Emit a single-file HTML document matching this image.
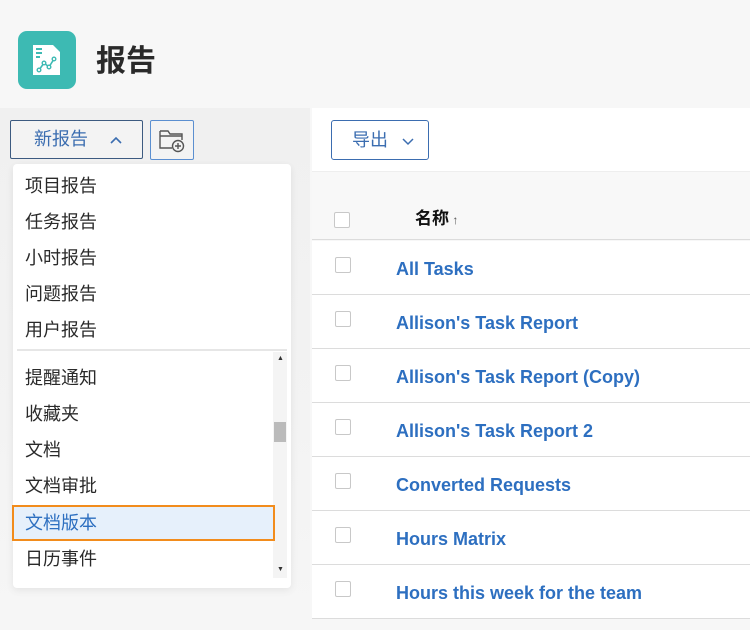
<!DOCTYPE html>
<html><head><meta charset="utf-8"><style>
*{margin:0;padding:0;box-sizing:border-box}
body{width:750px;height:630px;overflow:hidden;background:#f7f7f7;font-family:"Liberation Sans","Noto Sans CJK SC",sans-serif;position:relative}
.abs{position:absolute}
.item{position:absolute;left:25px;font-size:18px;color:#2a2a2a;line-height:36px;height:36px}
.row{position:absolute;left:312px;right:0;height:54px;border-bottom:1px solid #dcdcdc;background:#fff}
.row .cb{position:absolute;left:23px;top:16px;width:16px;height:16px;border:1px solid #c8c8c8;border-radius:2px;background:#fff}
.row .t{position:absolute;left:84px;top:0;line-height:56px;font-size:18px;font-weight:bold;color:#2d6fc0}
</style></head><body>
<div class="abs" style="left:18px;top:31px;width:58px;height:58px;border-radius:9px;background:#3dbab3"></div>
<svg class="abs" style="left:31px;top:43px" width="32" height="34" viewBox="0 0 32 34">
<path d="M2 2h20l7 7v23H2z" fill="#fff"/>
<path d="M5 6h6M5 10h6M5 14h4" stroke="#3dbab3" stroke-width="2"/>
<path d="M8 27l5-7 5 4 5-8" stroke="#3dbab3" stroke-width="1.6" fill="none"/>
<circle cx="8" cy="27" r="1.8" fill="#fff" stroke="#3dbab3" stroke-width="1.4"/><circle cx="13" cy="20" r="1.8" fill="#fff" stroke="#3dbab3" stroke-width="1.4"/><circle cx="18" cy="24" r="1.8" fill="#fff" stroke="#3dbab3" stroke-width="1.4"/><circle cx="23" cy="16" r="1.8" fill="#fff" stroke="#3dbab3" stroke-width="1.4"/>
</svg>
<div class="abs" style="left:96px;top:40px;font-size:30px;font-weight:bold;color:#2a2a2a;line-height:44px">报告</div>
<div class="abs" style="left:0;top:108px;width:310px;height:522px;background:linear-gradient(#f0f0f0,#f3f3f3 60%,#f6f6f6)"></div>
<div class="abs" style="left:10px;top:120px;width:133px;height:39px;border:1px solid #3c5a80;border-radius:2px;background:#f3f3f3"></div>
<div class="abs" style="left:34px;top:120px;line-height:39px;font-size:18px;color:#3b6db0">新报告</div>
<svg class="abs" style="left:110px;top:136px" width="12" height="8"><path d="M1 7l5-5 5 5" stroke="#3b6db0" stroke-width="1.6" fill="none"/></svg>
<div class="abs" style="left:150px;top:120px;width:44px;height:40px;border:1px solid #5b8fd0;border-radius:2px;background:#f3f3f3"></div>
<svg class="abs" style="left:158px;top:127px" width="28" height="26" viewBox="0 0 28 26"><path d="M2 4h8l2 3h12v6M2 4v17h12M2 9h22" stroke="#555" stroke-width="1.4" fill="none"/><circle cx="20" cy="19" r="5.5" fill="#f3f3f3" stroke="#555" stroke-width="1.4"/><path d="M20 16v6M17 19h6" stroke="#555" stroke-width="1.4"/></svg>
<div class="abs" style="left:13px;top:164px;width:278px;height:424px;background:#fff;border-radius:4px;box-shadow:0 2px 8px rgba(0,0,0,.08)"></div>
<div class="item" style="top:168px">项目报告</div>
<div class="item" style="top:204px">任务报告</div>
<div class="item" style="top:240px">小时报告</div>
<div class="item" style="top:276px">问题报告</div>
<div class="item" style="top:312px">用户报告</div>
<div class="abs" style="left:17px;top:349px;width:270px;height:2px;background:#e6e6e6"></div>
<div class="abs" style="left:273px;top:352px;width:14px;height:226px;background:#f4f4f4"></div>
<div class="abs" style="left:274px;top:422px;width:12px;height:20px;background:#bbb"></div>
<div class="abs" style="left:277px;top:355px;font-size:7px;color:#333">▲</div>
<div class="abs" style="left:277px;top:566px;font-size:7px;color:#333">▼</div>
<div class="item" style="top:360px">提醒通知</div>
<div class="item" style="top:396px">收藏夹</div>
<div class="item" style="top:432px">文档</div>
<div class="item" style="top:468px">文档审批</div>
<div class="abs" style="left:12px;top:505px;width:263px;height:36px;background:#e6f0fb;border:2px solid #f28c1c"></div>
<div class="item" style="top:505px;color:#2d6fc0">文档版本</div>
<div class="item" style="top:541px">日历事件</div>
<div class="abs" style="left:312px;top:108px;width:438px;height:64px;background:#fff;border-bottom:1px solid #eee"></div>
<div class="abs" style="left:331px;top:120px;width:98px;height:40px;border:1px solid #3b6db0;border-radius:3px;background:#fff"></div>
<div class="abs" style="left:352px;top:120px;line-height:40px;font-size:18px;color:#3b6db0">导出</div>
<svg class="abs" style="left:402px;top:138px" width="12" height="8"><path d="M1 1l5 5 5-5" stroke="#3b6db0" stroke-width="1.5" fill="none"/></svg>
<div class="abs" style="left:312px;top:172px;width:438px;height:68px;background:#f8f8f8;border-bottom:1px solid #dcdcdc"></div>
<div class="abs" style="left:334px;top:212px;width:16px;height:16px;border:1px solid #c8c8c8;border-radius:2px;background:#fff"></div>
<div class="abs" style="left:415px;top:206px;font-size:17px;font-weight:bold;color:#111;line-height:26px">名称<span style="font-size:12px;color:#555"> ↑</span></div>
<div class="row" style="top:241px"><div class="cb"></div><div class="t">All Tasks</div></div>
<div class="row" style="top:295px"><div class="cb"></div><div class="t">Allison's Task Report</div></div>
<div class="row" style="top:349px"><div class="cb"></div><div class="t">Allison's Task Report (Copy)</div></div>
<div class="row" style="top:403px"><div class="cb"></div><div class="t">Allison's Task Report 2</div></div>
<div class="row" style="top:457px"><div class="cb"></div><div class="t">Converted Requests</div></div>
<div class="row" style="top:511px"><div class="cb"></div><div class="t">Hours Matrix</div></div>
<div class="row" style="top:565px"><div class="cb"></div><div class="t">Hours this week for the team</div></div>
</body></html>
